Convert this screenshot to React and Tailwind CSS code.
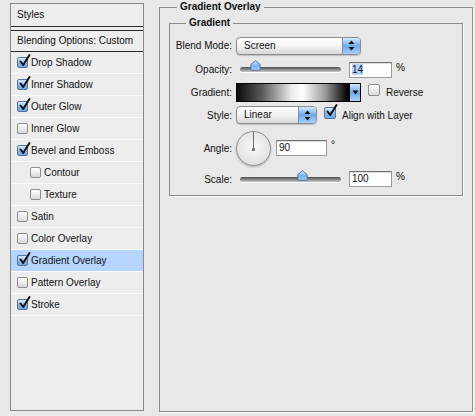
import React from 'react';

const font = "font-['Liberation_Sans',Arial,sans-serif]";

// Aqua style checkbox
const Check = ({ checked, large = false }) => {
  const size = large ? 'w-[12px] h-[12px]' : 'w-[11px] h-[11px]';
  const look = checked
    ? 'border-[#56749b] bg-gradient-to-b from-[#dcecfc] via-[#8fbdec] to-[#6aa5e4]'
    : 'border-[#8d8d8d] bg-gradient-to-b from-[#ffffff] to-[#d9d9d9]';
  return (
    <span className={`relative inline-block shrink-0 rounded-[2px] border ${size} ${look}`}>
      {checked && (
        <svg
          className="absolute -top-[4px] left-[1px] overflow-visible"
          width="12"
          height="13"
          viewBox="0 0 12 13"
        >
          <path d="M1.5 7.5 L4.2 11 L10.5 1" fill="none" stroke="#111" strokeWidth="2" strokeLinecap="round" strokeLinejoin="round" />
        </svg>
      )}
    </span>
  );
};

const Arrows = () => (
  <svg width="7" height="11" viewBox="0 0 7 11">
    <path d="M3.5 0.5 L6.5 4 H0.5 Z" fill="#111" />
    <path d="M3.5 10.5 L6.5 7 H0.5 Z" fill="#111" />
  </svg>
);

const Select = ({ value, width }) => (
  <div className={`flex h-[18px] ${width} rounded-[4px] border border-[#8c8c8c] bg-gradient-to-b from-white via-[#f3f3f3] to-[#d8d8d8] shadow-[0_1px_1px_rgba(0,0,0,0.18)] overflow-hidden`}>
    <span className="flex-1 pl-[7px] leading-[16px]">{value}</span>
    <span className="w-[18px] flex items-center justify-center border-l border-[#6d93c2] bg-gradient-to-b from-[#d3e7fb] via-[#6eaaea] to-[#a9d0f6]">
      <Arrows />
    </span>
  </div>
);

const Thumb = () => (
  <svg width="11" height="11" viewBox="0 0 11 11">
    <defs>
      <linearGradient id="thumbFill" x1="0" y1="0" x2="0" y2="1">
        <stop offset="0" stopColor="#d7e9fc" />
        <stop offset="0.55" stopColor="#79b1ec" />
        <stop offset="1" stopColor="#a9d0f7" />
      </linearGradient>
    </defs>
    <path d="M5.5 0.6 L10.2 4.6 V9.2 Q10.2 10.3 9.1 10.3 H1.9 Q0.8 10.3 0.8 9.2 V4.6 Z" fill="url(#thumbFill)" stroke="#48709f" strokeWidth="0.9" />
  </svg>
);

const Slider = ({ pos }) => (
  <div className="relative ml-[4px] w-[101px] h-[5px] rounded-full bg-gradient-to-b from-[#4f4f4f] via-[#8a8a8a] to-[#c9c9c9] shadow-[0_1px_0_#fff]">
    <span className="absolute -top-[7px]" style={{ left: pos - 5 }}>
      <Thumb />
    </span>
  </div>
);

const Field = ({ value, width, selected = false }) => (
  <div className={`h-[16px] ${width} border border-[#9b9b9b] border-t-[#6f6f6f] bg-white pl-[2px] leading-[14px] shadow-[inset_0_1px_1px_rgba(0,0,0,0.15)]`}>
    <span className={selected ? 'bg-[#b5d5ff]' : ''}>{value}</span>
  </div>
);

const Row = ({ label, height, children }) => (
  <div className={`flex items-center ${height}`}>
    <span className="w-[62px] text-right">{label}</span>
    <div className="ml-[4px] flex items-center">{children}</div>
  </div>
);

const styleItems = [
  { name: 'Drop Shadow', checked: true },
  { name: 'Inner Shadow', checked: true },
  { name: 'Outer Glow', checked: true },
  { name: 'Inner Glow', checked: false },
  { name: 'Bevel and Emboss', checked: true },
  { name: 'Contour', checked: false, sub: true },
  { name: 'Texture', checked: false, sub: true },
  { name: 'Satin', checked: false },
  { name: 'Color Overlay', checked: false },
  { name: 'Gradient Overlay', checked: true, active: true },
  { name: 'Pattern Overlay', checked: false },
  { name: 'Stroke', checked: true },
];

export default function App() {
  return (
    <div className={`flex w-[475px] h-[416px] bg-[#e8e8e8] text-[10px] text-[#111] ${font}`}>
      {/* Styles list */}
      <div className="ml-[10px] mt-[3px] w-[134px] h-[408px] border border-[#8a8a8a] bg-[#ededed]">
        <div className="h-[23px] pl-[6px] leading-[22px] border-b border-[#2a2a2a]">Styles</div>
        <div className="h-[3px]" />
        <div className="h-[22px] pl-[6px] leading-[20px] border-y border-[#2a2a2a]">Blending Options: Custom</div>
        {styleItems.map((item) => (
          <div
            key={item.name}
            className={`flex items-center h-[22px] border-b border-[#fbfbfb] ${item.sub ? 'pl-[19px]' : 'pl-[6px]'} ${item.active ? 'bg-[#b5d5ff]' : ''}`}
          >
            <Check checked={item.checked} />
            <span className="ml-[3px]">{item.name}</span>
          </div>
        ))}
      </div>

      {/* Gradient Overlay group */}
      <fieldset className="ml-[15px] w-[314px] h-[412px] border border-[#8c8c8c] shadow-[1px_1px_0_#fff]">
        <legend className="ml-[17px] px-[3px] font-bold leading-[14px]">Gradient Overlay</legend>
        <fieldset className="mt-[2px] mx-[9px] border border-[#8c8c8c] pt-[4px] pb-[5px] shadow-[1px_1px_0_#fff]">
          <legend className="ml-[16px] px-[3px] font-bold leading-[14px]">Gradient</legend>

          <Row label="Blend Mode:" height="h-[23px]">
            <Select value="Screen" width="w-[125px]" />
          </Row>

          <Row label="Opacity:" height="h-[25px]">
            <Slider pos={15} />
            <div className="ml-[8px]">
              <Field value="14" width="w-[43px]" selected />
            </div>
            <span className="ml-[4px] -mt-[5px]">%</span>
          </Row>

          <Row label="Gradient:" height="h-[20px]">
            <div className="flex h-[19px] w-[125px] border border-black">
              <div className="flex-1 bg-[linear-gradient(to_right,#0b0b0b,#5a5a5a_22%,#e9e9e9_48%,#ffffff_58%,#9a9a9a_78%,#050505_97%)]" />
              <div className="w-[10px] flex items-center justify-center bg-gradient-to-b from-[#d3e7fb] via-[#6eaaea] to-[#a9d0f6]">
                <svg width="7" height="5" viewBox="0 0 7 5">
                  <path d="M0.5 0.5 H6.5 L3.5 4.5 Z" fill="#111" />
                </svg>
              </div>
            </div>
            <span className="ml-[7px]"><Check large /></span>
            <span className="ml-[6px]">Reverse</span>
          </Row>

          <Row label="Style:" height="h-[26px]">
            <Select value="Linear" width="w-[81px]" />
            <span className="ml-[7px]"><Check checked large /></span>
            <span className="ml-[6px]">Align with Layer</span>
          </Row>

          <Row label="Angle:" height="h-[40px]">
            <div className="relative w-[35px] h-[35px] rounded-full border border-[#8e8e8e] bg-[radial-gradient(circle_at_50%_45%,#fafafa,#e6e6e6_60%,#cfcfcf)] shadow-[0_1px_2px_rgba(0,0,0,0.25)]">
              <span className="absolute left-[16px] top-0 h-[17px] w-px bg-[#6a6a6a]" />
              <span className="absolute left-[15px] top-[16px] h-[3px] w-[3px] bg-[#7a7a7a]" />
            </div>
            <div className="ml-[5px]">
              <Field value="90" width="w-[51px]" />
            </div>
            <span className="ml-[4px] -mt-[8px]">°</span>
          </Row>

          <Row label="Scale:" height="h-[22px]">
            <Slider pos={62} />
            <div className="ml-[8px]">
              <Field value="100" width="w-[43px]" />
            </div>
            <span className="ml-[4px] -mt-[5px]">%</span>
          </Row>
        </fieldset>
      </fieldset>
    </div>
  );
}
